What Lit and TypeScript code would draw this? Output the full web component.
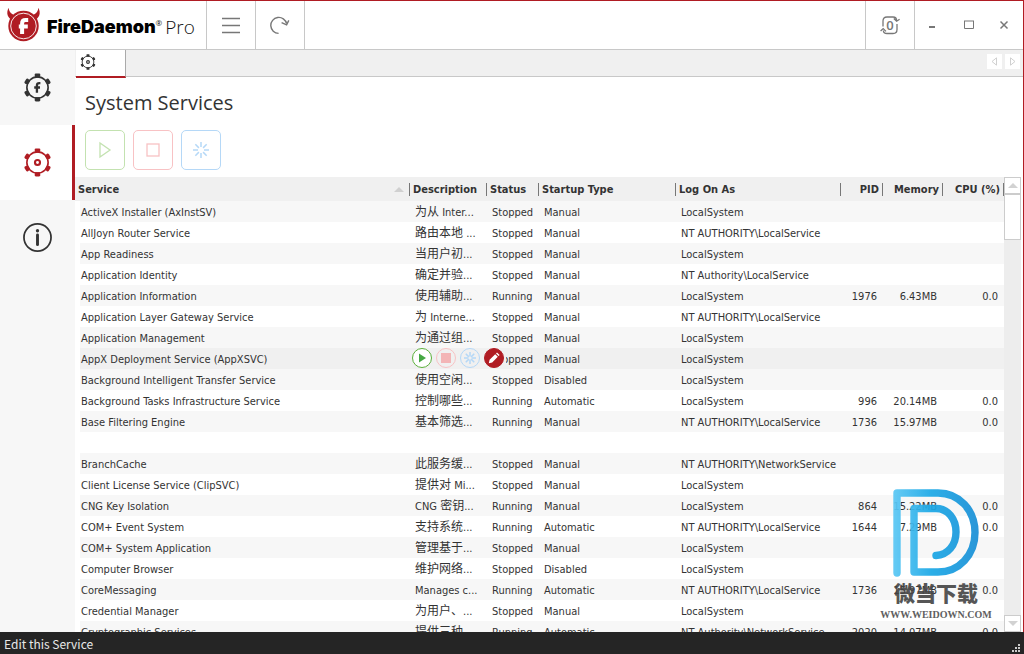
import { LitElement, html, css, svg, nothing } from "lit";
import { customElement } from "lit/decorators.js";
import { classMap } from "lit/directives/class-map.js";

interface Service {
  name: string;
  desc: string;
  status: string;
  startup: string;
  logon: string;
  pid?: string;
  mem?: string;
  cpu?: string;
  active?: boolean;
}

const LS = "LocalSystem";
const NT = "NT AUTHORITY\\LocalService";

const row = (
  name: string, desc: string, status: string, startup: string, logon: string,
  pid = "", mem = "", cpu = "", active = false,
): Service => ({ name, desc, status, startup, logon, pid, mem, cpu, active });

const services: Service[] = [
  row("ActiveX Installer (AxInstSV)", "为从 Inter...", "Stopped", "Manual", LS),
  row("AllJoyn Router Service", "路由本地 ...", "Stopped", "Manual", NT),
  row("App Readiness", "当用户初...", "Stopped", "Manual", LS),
  row("Application Identity", "确定并验...", "Stopped", "Manual", "NT Authority\\LocalService"),
  row("Application Information", "使用辅助...", "Running", "Manual", LS, "1976", "6.43MB", "0.0"),
  row("Application Layer Gateway Service", "为 Interne...", "Stopped", "Manual", NT),
  row("Application Management", "为通过组...", "Stopped", "Manual", LS),
  row("AppX Deployment Service (AppXSVC)", "", "Stopped", "Manual", LS, "", "", "", true),
  row("Background Intelligent Transfer Service", "使用空闲...", "Stopped", "Disabled", LS),
  row("Background Tasks Infrastructure Service", "控制哪些...", "Running", "Automatic", LS, "996", "20.14MB", "0.0"),
  row("Base Filtering Engine", "基本筛选...", "Running", "Manual", NT, "1736", "15.97MB", "0.0"),
  row("", "", "", "", ""),
  row("BranchCache", "此服务缓...", "Stopped", "Manual", "NT AUTHORITY\\NetworkService"),
  row("Client License Service (ClipSVC)", "提供对 Mi...", "Stopped", "Manual", LS),
  row("CNG Key Isolation", "CNG 密钥...", "Running", "Manual", LS, "864", "15.22MB", "0.0"),
  row("COM+ Event System", "支持系统...", "Running", "Automatic", NT, "1644", "7.29MB", "0.0"),
  row("COM+ System Application", "管理基于...", "Stopped", "Manual", LS),
  row("Computer Browser", "维护网络...", "Stopped", "Disabled", LS),
  row("CoreMessaging", "Manages c...", "Running", "Automatic", NT, "1736", "15.97MB", "0.0"),
  row("Credential Manager", "为用户、...", "Stopped", "Manual", LS),
  row("Cryptographic Services", "提供三种...", "Running", "Automatic", "NT Authority\\NetworkService", "2020", "14.07MB", "0.0"),
];

// Han characters are set one size larger than the Latin text around them.
const mixed = (text: string) =>
  text.split(/([\u3000-\u9fff]+)/).filter(Boolean).map((part) =>
    /[\u3000-\u9fff]/.test(part) ? html`<span class="han">${part}</span>` : part,
  );

const teeth = [0, 60, 120, 180, 240, 300].map(
  (a) => svg`<path d="M12.8 5 L12 2 Q12 .5 13.4 .5 H16.600 Q18 .5 18 2 L17.200 5 Z" fill="currentColor" transform="rotate(${a} 15 15)"/>`,
);

const gear = (size: number, inner: unknown) => html`
  <svg width=${size} height=${size} viewBox="0 0 30 30" aria-hidden="true">
    <circle cx="15" cy="15" r="11" fill="none" stroke="currentColor" stroke-width="1.7"/>
    ${teeth}${inner}
  </svg>`;

const gearF = svg`<path d="M18 10.400 H16.800 Q14.400 10.400 14.400 12.900 V20.400 M11.600 15 H17.600" fill="none" stroke="currentColor" stroke-width="2.4"/>`;
const gearDot = svg`<circle cx="15" cy="15" r="2.600" fill="none" stroke="currentColor" stroke-width="2.2"/>`;

const rays = (cx: number, cy: number, r1: number, r2: number, w: number) =>
  [0, 45, 90, 135, 180, 225, 270, 315].map(
    (a) => svg`<path d="M${cx} ${cy - r1} V${cy - r2}" stroke="currentColor" stroke-width=${w} transform="rotate(${a} ${cx} ${cy})"/>`,
  );

@customElement("app-root")
export class AppRoot extends LitElement {
  static styles = css`
    :host {
      display: flex;
      flex-direction: column;
      position: relative;
      height: 100vh;
      box-sizing: border-box;
      overflow: hidden;
      background: #fff;
      color: #333;
      font: 11px/19px "DejaVu Sans Condensed", "Noto Sans", "Noto Sans CJK SC", sans-serif;
    }
    button {
      display: inline-flex;
      align-items: center;
      justify-content: center;
      box-sizing: border-box;
      padding: 0;
      border: 0;
      background: none;
      color: inherit;
      font: inherit;
    }
    svg { display: block; flex: none; }
    .window {
      flex: 1;
      min-height: 0;
      display: flex;
      flex-direction: column;
      border-top: 1px solid #b01c23;
      border-right: 1px solid #b01c23;
    }
    .titlebar {
      display: flex;
      flex: none;
      height: 48px;
      border-bottom: 1px solid #c8c8c8;
      color: #777;
    }
    .brand {
      display: flex;
      align-items: center;
      box-sizing: border-box;
      width: 206px;
      padding-left: 6px;
      color: #111;
      white-space: nowrap;
    }
    .word { margin-left: 6px; font: 900 18px/24px Inter, sans-serif; color: #000; padding-top: 4px; }
    .reg { font: 8px/8px "Open Sans", sans-serif; align-self: flex-start; padding-top: 18px; }
    .pro { margin-left: 3px; font: 300 19px/24px "Open Sans", sans-serif; padding-top: 3px; }
    .tool { width: 49px; border-left: 1px solid #c8c8c8; }
    .tool.last { width: 50px; border-right: 1px solid #c8c8c8; }
    .spring { flex: 1; }
    .caption { width: 36px; }
    .body { flex: 1; min-height: 0; display: flex; }
    .side { width: 75px; flex: none; background: #f7f7f7; color: #333; }
    .nav { width: 75px; height: 75px; }
    .nav.on { background: #fff; color: #b01c23; border-right: 3px solid #b01c23; padding-left: 3px; }
    .main { flex: 1; min-width: 0; display: flex; flex-direction: column; }
    .tabs {
      display: flex;
      flex: none;
      box-sizing: border-box;
      height: 27px;
      padding-left: 1px;
      background: #f0f0f0;
      border-bottom: 1px solid #c8c8c8;
    }
    .tab {
      width: 50px;
      height: 28px;
      justify-content: flex-start;
      padding: 0 0 2px 4px;
      background: #fff;
      border-right: 1px solid #aaa;
      border-bottom: 2px solid #b01c23;
    }
    .pagers { display: flex; gap: 3px; margin-left: auto; padding: 4px 3px 0 0; }
    .pager { width: 15px; height: 15px; background: #fff; color: #d0d0d0; }
    .title { margin: 0; padding: 12px 10px 14px; font: 400 20px/27px "Open Sans", sans-serif; color: #333; }
    .actions { display: flex; gap: 8px; padding: 0 10px 7px; }
    .action { width: 40px; height: 40px; border: 1px solid; border-radius: 5px; }
    .green { color: #c3e2b0; }
    .red { color: #f8c2c4; }
    .blue { color: #b5d8f7; }
    .list { flex: 1; min-height: 0; display: flex; padding-right: 2px; }
    .scroll { flex: 1; min-width: 0; overflow: hidden; }
    table { width: 100%; table-layout: fixed; border-spacing: 0; border-collapse: separate; }
    th {
      height: 24px;
      padding: 0 3px;
      background: #f0f0f0;
      text-align: left;
      font-weight: 700;
      white-space: nowrap;
    }
    .bar {
      background-image: linear-gradient(#777, #777);
      background-size: 1px 13px;
      background-repeat: no-repeat;
      background-position: right 6px;
    }
    .head { display: flex; align-items: center; justify-content: space-between; padding-right: 3px; }
    td { height: 19px; padding: 2px 5px 0; white-space: nowrap; overflow: hidden; }
    tr:nth-child(odd) td { background: #f7f7f7; }
    tr.active td { background: #f0f0f0; }
    td.name { border-left: 5px solid #fff; padding-left: 1px; }
    .han { font-family: "Noto Sans CJK SC", sans-serif; font-size: 12px; line-height: 1; }
    .num { text-align: right; }
    td.num { padding-right: 6px; }
    th.num { padding-right: 4px; }
    .c-desc { width: 77px; }
    .c-status { width: 52px; }
    .c-start { width: 137px; }
    .c-logon { width: 165px; }
    .c-pid { width: 42px; }
    .c-mem { width: 60px; }
    .c-cpu { width: 61px; }
    td.host { position: relative; overflow: visible; }
    .rowtools {
      position: absolute;
      top: 0;
      left: 2px;
      display: flex;
      gap: 4px;
      padding-right: 2px;
      background: #f0f0f0;
    }
    .rowtool { width: 20px; height: 20px; border: 1px solid; border-radius: 50%; }
    .play { color: #5cb03c; background: #fff; }
    .edit { color: #fff; background: #b01c23; border-color: #b01c23; }
    .scrollbar { display: flex; flex-direction: column; width: 17px; flex: none; background: #ededed; }
    .arrow, .thumb { box-sizing: border-box; background: #fff; border: 1px solid #ccc; color: #d2d2d2; }
    .arrow { height: 17px; flex: none; }
    .thumb { height: 46px; }
    .fill { flex: 1; }
    .status {
      display: flex;
      flex: none;
      align-items: center;
      justify-content: space-between;
      height: 22px;
      padding: 0 4px;
      background: #252525;
      color: #e8e8e8;
      font: 12px/22px "Noto Sans CJK SC", sans-serif;
    }
    .label { padding-top: 1px; }
    .grip { align-self: flex-end; padding-bottom: 2px; }
    .mark {
      position: absolute;
      right: 32px;
      bottom: 33px;
      width: 112px;
      display: flex;
      flex-direction: column;
      align-items: center;
      pointer-events: none;
      color: #444;
    }
    .cn { font: 900 21px/28px "Noto Sans CJK SC", sans-serif; padding: 1px 0 3px; opacity: .9; }
    .url { font: 700 10px/12px "Liberation Serif", serif; opacity: .85; }
  `;

  private header() {
    return html`
      <header class="titlebar">
        <div class="brand">
          <svg width="35" height="36" viewBox="0 0 35 36" aria-hidden="true">
            <path d="M2.6 .8 C0 6 1.2 11 7.2 13.6 L12.2 8.2 C7.4 8.6 3.4 6.8 2.6 .8 Z M32.4 .8 C35 6 33.8 11 27.8 13.6 L22.8 8.2 C27.6 8.6 31.6 6.8 32.4 .8 Z" fill="#b01c23"/>
            <circle cx="17.5" cy="19" r="15.2" fill="#b01c23"/>
            <circle cx="17.5" cy="19" r="12.8" fill="none" stroke="#fff" stroke-width=".9"/>
            <path d="M22.2 13 H19.6 Q16.1 13 16.1 16.4 V27 M12.8 19.6 H21.8" fill="none" stroke="#fff" stroke-width="4"/>
          </svg>
          <span class="word">FireDaemon</span><span class="reg">®</span><span class="pro">Pro</span>
        </div>
        <button class="tool" aria-label="Menu">
          <svg width="20" height="18" viewBox="0 0 20 18"><path d="M1 2.5H19M1 9.5H19M1 16.5H19" stroke="#777" stroke-width="1.4"/></svg>
        </button>
        <button class="tool last" aria-label="Refresh">
          <svg width="20" height="20" viewBox="0 0 20 20" fill="none" stroke="#777" stroke-width="1.4">
            <path d="M8.6 18.4 A8 8 0 1 1 16.6 8.6"/><path d="M11.6 7.6 L16.6 9.8 L18.8 5.4"/>
          </svg>
        </button>
        <span class="spring"></span>
        <button class="tool last" aria-label="Pending restarts">
          <svg width="22" height="22" viewBox="0 0 22 22" fill="none" stroke="#777" stroke-width="1.3">
            <path d="M4 12.5 V7 Q4 3 8 3 H14 Q17.6 3 17.6 6.6 M14.8 4.6 L17.6 7.2 L20.6 5.2"/>
            <path d="M18 10 V15.5 Q18 19.5 14 19.5 H8 Q4.4 19.5 4.4 16.4 M1.6 17 L4.2 14.6 L7 17.4"/>
            <text x="11" y="16" text-anchor="middle" font-family="Open Sans" font-size="13" font-weight="600" fill="#777" stroke="none">0</text>
          </svg>
        </button>
        <button class="caption" aria-label="Minimize"><svg width="10" height="10"><path d="M1 7H7" stroke="#777" stroke-width="2"/></svg></button>
        <button class="caption" aria-label="Maximize"><svg width="10" height="10"><path d="M.5 1V8.5H9.5V1M0 1H10" stroke="#777" fill="none"/></svg></button>
        <button class="caption" aria-label="Close"><svg width="10" height="10"><path d="M.5 1.5L7.5 8.5M7.5 1.5L.5 8.5" stroke="#777" stroke-width="1.5"/></svg></button>
      </header>`;
  }

  private rowTools() {
    return html`
      <div class="rowtools">
        <button class="rowtool play" aria-label="Start"><svg width="18" height="18"><path d="M6 4.5V13.5L13 9Z" fill="#45a843"/></svg></button>
        <button class="rowtool red" aria-label="Stop"><svg width="18" height="18"><rect x="4" y="4" width="10" height="10" fill="#f3b5b6"/></svg></button>
        <button class="rowtool blue" aria-label="Restart"><svg width="18" height="18">${rays(9, 9, 6, 1.6, 1.5)}</svg></button>
        <button class="rowtool edit" aria-label="Edit">
          <svg width="18" height="18"><path d="M3.8 14.2 L4.6 10.8 L10.2 5.2 L12.8 7.8 L7.2 13.4 Z M11 4.4 L12 3.4 L14.6 6 L13.6 7 Z" fill="#fff"/></svg>
        </button>
      </div>`;
  }

  private table() {
    return html`
      <table>
        <colgroup>
          <col><col class="c-desc"><col class="c-status"><col class="c-start"><col class="c-logon"><col class="c-pid"><col class="c-mem"><col class="c-cpu">
        </colgroup>
        <thead>
          <tr>
            <th class="bar"><div class="head">Service<svg width="10" height="5"><path d="M0 5L5 0L10 5Z" fill="#d0d0d0"/></svg></div></th>
            <th class="bar">Description</th><th class="bar">Status</th><th class="bar">Startup Type</th><th class="bar">Log On As</th>
            <th class="bar num">PID</th><th class="bar num">Memory</th><th class="bar num">CPU (%)</th>
          </tr>
        </thead>
        <tbody>
          ${services.map((s) => html`
            <tr class=${classMap({ active: !!s.active })}>
              <td class="name">${s.name}</td>
              <td class=${classMap({ host: !!s.active })}>${s.active ? this.rowTools() : s.desc ? mixed(s.desc) : nothing}</td>
              <td>${s.status}</td><td>${s.startup}</td><td>${s.logon}</td>
              <td class="num">${s.pid}</td><td class="num">${s.mem}</td><td class="num">${s.cpu}</td>
            </tr>`)}
        </tbody>
      </table>`;
  }

  render() {
    return html`
      <div class="window">
        ${this.header()}
        <div class="body">
          <nav class="side">
            <button class="nav" aria-label="FireDaemon services">${gear(29, gearF)}</button>
            <button class="nav on" aria-label="System services">${gear(29, gearDot)}</button>
            <button class="nav" aria-label="About">
              <svg width="29" height="29" viewBox="0 0 30 30">
                <circle cx="15" cy="15" r="14" fill="none" stroke="currentColor" stroke-width="1.8"/>
                <circle cx="15" cy="8" r="1.7" fill="currentColor"/>
                <path d="M15 12.4V22.4" stroke="currentColor" stroke-width="3" stroke-linecap="round"/>
              </svg>
            </button>
          </nav>
          <main class="main">
            <div class="tabs">
              <button class="tab" aria-label="System Services">${gear(16, gearDot)}</button>
              <div class="pagers">
                <button class="pager" aria-label="Previous tab"><svg width="7" height="9"><path d="M5.5 .8V8.2L1 4.5Z" fill="none" stroke="currentColor"/></svg></button>
                <button class="pager" aria-label="Next tab"><svg width="7" height="9"><path d="M1.5 .8V8.2L6 4.5Z" fill="none" stroke="currentColor"/></svg></button>
              </div>
            </div>
            <h1 class="title">System Services</h1>
            <div class="actions">
              <button class="action green" aria-label="Start"><svg width="20" height="20"><path d="M5 3V17L15 10Z" fill="none" stroke="currentColor" stroke-width="1.3"/></svg></button>
              <button class="action red" aria-label="Stop"><svg width="20" height="20"><rect x="4" y="4" width="12" height="12" fill="none" stroke="currentColor" stroke-width="1.3"/></svg></button>
              <button class="action blue" aria-label="Restart"><svg width="20" height="20">${rays(10, 10, 8, 3, 1.5)}</svg></button>
            </div>
            <div class="list">
              <div class="scroll">${this.table()}</div>
              <div class="scrollbar">
                <button class="arrow" aria-label="Scroll up"><svg width="10" height="5"><path d="M0 5L5 0L10 5Z" fill="currentColor"/></svg></button>
                <div class="thumb"></div>
                <div class="fill"></div>
                <button class="arrow" aria-label="Scroll down"><svg width="10" height="5"><path d="M0 0L5 5L10 0Z" fill="currentColor"/></svg></button>
              </div>
            </div>
          </main>
        </div>
      </div>
      <footer class="status">
        <span class="label">Edit this Service</span>
        <svg class="grip" width="8" height="8" fill="#ccc"><path d="M6 0h2v2h-2zM3 3h2v2h-2zM6 3h2v2h-2zM0 6h2v2h-2zM3 6h2v2h-2zM6 6h2v2h-2z"/></svg>
      </footer>
      <div class="mark">
        <svg width="86" height="88" viewBox="0 0 86 88" fill="none" stroke-width="7.4" stroke-linecap="round" stroke-linejoin="round" opacity=".93">
          <defs>
            <linearGradient id="g" gradientUnits="userSpaceOnUse" x1="0" y1="40" x2="86" y2="40">
              <stop offset="0" stop-color="#5cc8f5"/><stop offset=".45" stop-color="#1ba8e6"/><stop offset="1" stop-color="#1a8fd6"/>
            </linearGradient>
          </defs>
          <path d="M4 84 V4 H45 C66 4 82 21 82 43.500 C82 66 66 83 45 83 H21 V19.500 H43 C55 19.500 63 30 63 43 C63 56 55 66 43 66.500" stroke="url(#g)"/>
        </svg>
        <span class="cn">微当下载</span>
        <span class="url">WWW.WEIDOWN.COM</span>
      </div>`;
  }
}
